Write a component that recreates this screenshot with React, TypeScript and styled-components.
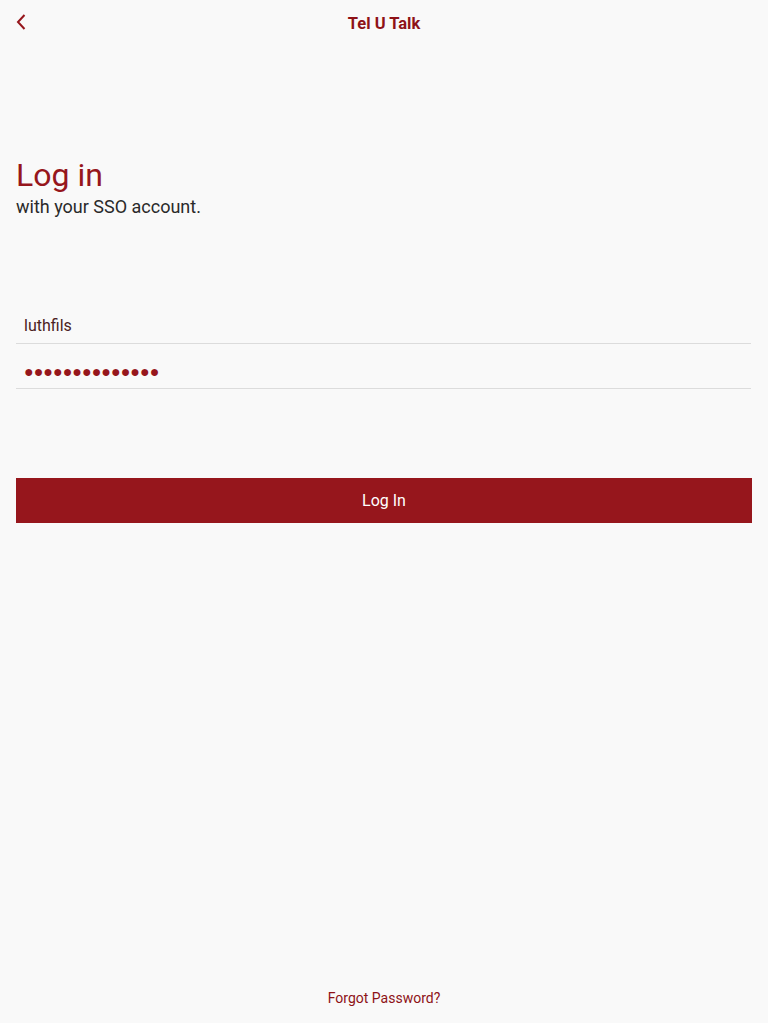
import React from "react";
import styled, { createGlobalStyle } from "styled-components";

const Global = createGlobalStyle`
  html, body { margin: 0; padding: 0; background: #f9f9f9; }
  body { font-family: Roboto, "Noto Sans", sans-serif; }
  * { box-sizing: border-box; }
`;

const Page = styled.div`
  min-height: 1023px;
  display: flex;
  flex-direction: column;
  padding: 0 16px;
`;

const Header = styled.header`
  height: 46px;
  display: grid;
  grid-template-columns: 40px 1fr 40px;
  align-items: center;
`;

const BackButton = styled.button`
  border: 0;
  background: none;
  padding: 0;
  width: 14px;
  height: 20px;
  display: flex;
  align-items: center;
  cursor: pointer;
  margin-top: -2px;
`;

const HeaderTitle = styled.h1`
  margin: 0;
  text-align: center;
  font-size: 16.5px;
  font-weight: 700;
  color: #8e1217;
`;

const Intro = styled.div`
  margin-top: 109px;
`;

const Title = styled.h2`
  margin: 0;
  font-size: 32px;
  font-weight: 400;
  color: #96161c;
  line-height: 40px;
`;

const Subtitle = styled.p`
  margin: 1px 0 0;
  font-size: 18px;
  color: #2a2a2a;
  line-height: 22px;
`;

const Form = styled.form`
  margin-top: 81px;
  display: flex;
  flex-direction: column;
`;

const Field = styled.div`
  height: 45px;
  border-bottom: 1px solid #dcdcdc;
  display: flex;
  align-items: flex-end;
  padding: 0 0 7px 8px;
  margin-right: 1px;
`;

const TextValue = styled.span`
  font-size: 16px;
  color: #4a2222;
  line-height: 20px;
`;

const Dots = styled.span`
  font-size: 16px;
  color: #96161c;
  letter-spacing: 0px;
  line-height: 20px;
  margin-bottom: -1px;
`;

const SubmitButton = styled.button`
  margin-top: 89px;
  height: 45px;
  border: 0;
  background: #96161c;
  color: #ffffff;
  font-family: Roboto, sans-serif;
  font-size: 16px;
  cursor: pointer;
`;

const Footer = styled.div`
  margin-top: auto;
  padding-bottom: 16px;
  text-align: center;
`;

const ForgotLink = styled.a`
  font-size: 14px;
  color: #8e1217;
  text-decoration: none;
`;

export default function App() {
  return (
    <>
      <Global />
      <Page>
        <Header>
          <BackButton aria-label="Back">
            <svg width="10" height="16" viewBox="0 0 10 16">
              <path d="M8.5 1 L2 8 L8.5 15" fill="none" stroke="#96161c" strokeWidth="2" />
            </svg>
          </BackButton>
          <HeaderTitle>Tel U Talk</HeaderTitle>
          <span />
        </Header>
        <Intro>
          <Title>Log in</Title>
          <Subtitle>with your SSO account.</Subtitle>
        </Intro>
        <Form onSubmit={(e) => e.preventDefault()}>
          <Field>
            <TextValue>luthfils</TextValue>
          </Field>
          <Field>
            <Dots>{"\u25CF".repeat(14)}</Dots>
          </Field>
          <SubmitButton type="submit">Log In</SubmitButton>
        </Form>
        <Footer>
          <ForgotLink href="#">Forgot Password?</ForgotLink>
        </Footer>
      </Page>
    </>
  );
}
